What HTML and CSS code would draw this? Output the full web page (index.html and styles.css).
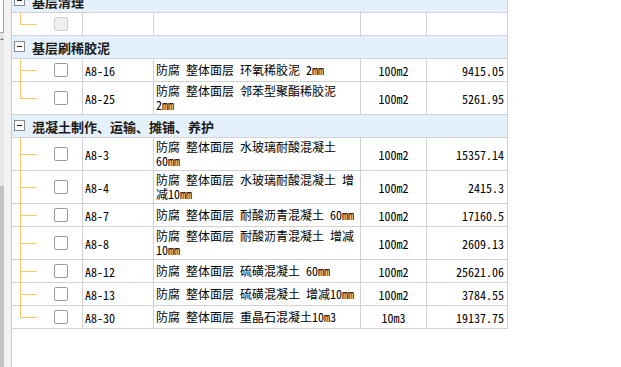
FILE: index.html
```html
<!DOCTYPE html>
<html lang="zh-CN">
<head>
<meta charset="utf-8">
<title>定额列表</title>
<link rel="stylesheet" href="styles.css">
</head>
<body>
<div class="page">
  <div class="side">
    <div class="side-track">
      <div class="side-box"></div>
      <div class="side-arrow"><span class="caret"></span></div>
      <div class="side-mid"></div>
      <div class="side-thumb"></div>
    </div>
  </div>
  <div class="main">
    <div class="list">
      <div class="group group-first"><span class="toggle"></span><span class="gtitle">基层清理</span></div>
      <div class="row">
        <div class="c tree last"><span class="chk disabled"></span></div>
        <div class="c code"></div>
        <div class="c desc"></div>
        <div class="c unit"></div>
        <div class="c num"></div>
      </div>

      <div class="group"><span class="toggle"></span><span class="gtitle">基层刷稀胶泥</span></div>
      <div class="row">
        <div class="c tree"><span class="chk"></span></div>
        <div class="c code">A8-16</div>
        <div class="c desc">防腐 整体面层 环氧稀胶泥 2mm</div>
        <div class="c unit">100m2</div>
        <div class="c num">9415.05</div>
      </div>
      <div class="row tall">
        <div class="c tree last"><span class="chk"></span></div>
        <div class="c code">A8-25</div>
        <div class="c desc">防腐 整体面层 邻苯型聚酯稀胶泥 2mm</div>
        <div class="c unit">100m2</div>
        <div class="c num">5261.95</div>
      </div>

      <div class="group"><span class="toggle"></span><span class="gtitle">混凝土制作、运输、摊铺、养护</span></div>
      <div class="row tall">
        <div class="c tree"><span class="chk"></span></div>
        <div class="c code">A8-3</div>
        <div class="c desc">防腐 整体面层 水玻璃耐酸混凝土 60mm</div>
        <div class="c unit">100m2</div>
        <div class="c num">15357.14</div>
      </div>
      <div class="row tall">
        <div class="c tree"><span class="chk"></span></div>
        <div class="c code">A8-4</div>
        <div class="c desc">防腐 整体面层 水玻璃耐酸混凝土 增减10mm</div>
        <div class="c unit">100m2</div>
        <div class="c num">2415.3</div>
      </div>
      <div class="row">
        <div class="c tree"><span class="chk"></span></div>
        <div class="c code">A8-7</div>
        <div class="c desc">防腐 整体面层 耐酸沥青混凝土 60mm</div>
        <div class="c unit">100m2</div>
        <div class="c num">17160.5</div>
      </div>
      <div class="row tall">
        <div class="c tree"><span class="chk"></span></div>
        <div class="c code">A8-8</div>
        <div class="c desc">防腐 整体面层 耐酸沥青混凝土 增减10mm</div>
        <div class="c unit">100m2</div>
        <div class="c num">2609.13</div>
      </div>
      <div class="row">
        <div class="c tree"><span class="chk"></span></div>
        <div class="c code">A8-12</div>
        <div class="c desc">防腐 整体面层 硫磺混凝土 60mm</div>
        <div class="c unit">100m2</div>
        <div class="c num">25621.06</div>
      </div>
      <div class="row">
        <div class="c tree"><span class="chk"></span></div>
        <div class="c code">A8-13</div>
        <div class="c desc">防腐 整体面层 硫磺混凝土 增减10mm</div>
        <div class="c unit">100m2</div>
        <div class="c num">3784.55</div>
      </div>
      <div class="row">
        <div class="c tree last"><span class="chk"></span></div>
        <div class="c code">A8-30</div>
        <div class="c desc">防腐 整体面层 重晶石混凝土10m3</div>
        <div class="c unit">10m3</div>
        <div class="c num">19137.75</div>
      </div>
    </div>
  </div>
</div>
</body>
</html>
```

FILE: styles.css
```css
* { box-sizing: border-box; }
html, body { margin: 0; padding: 0; background: #fff; }
body {
  width: 621px;
  height: 367px;
  overflow: hidden;
  font-family: "Noto Sans Mono CJK SC", "Noto Sans CJK SC", "Liberation Mono", monospace;
  font-size: 12px;
  color: #000;
}
.page { display: flex; height: 367px; }

.side { width: 11px; background: #f2f2f2; flex: none; display: flex; }
.side-track { width: 4px; display: flex; flex-direction: column; }
.side-box { height: 33px; background: #fff; border-right: 1px solid #a8a8a8; border-bottom: 1px solid #a8a8a8; flex: none; }
.side-arrow { height: 12px; background: #e6e6e6; flex: none; display: flex; justify-content: center; align-items: center; }
.caret {
  width: 0; height: 0;
  border-left: 2px solid transparent;
  border-right: 2px solid transparent;
  border-bottom: 2px solid #777;
}
.side-mid { height: 141px; background: #e6e6e6; flex: none; }
.side-thumb { flex: 1; background: #c3c3c3; }

.main { flex: 1; border-left: 1px solid #cacaca; }
.list { width: 496px; }

.group {
  height: 23px;
  background: #e4f1fc;
  border-right: 1px solid #d2d2d2;
  border-bottom: 1px solid #d2d2d2;
  display: flex;
  align-items: center;
  padding-left: 2px;
}
.group-first { margin-top: -10px; }
.toggle {
  width: 11px; height: 11px;
  border: 1px solid #8a8a8a;
  background: #fff;
  position: relative;
  flex: none;
  margin-top: -1px;
}
.toggle::after {
  content: "";
  position: absolute;
  left: 2px; right: 2px; top: 4px;
  height: 1px;
  background: #222;
}
.gtitle {
  margin-left: 7px;
  font-family: "Noto Sans CJK SC", sans-serif;
  font-weight: bold;
  font-size: 13px;
  color: #1a1a1a;
  white-space: nowrap;
}

.row {
  display: grid;
  grid-template-columns: 71px 71px 207px 66px 81px;
  height: 23px;
}
.row.tall { height: 33px; }
.c {
  border-right: 1px solid #d2d2d2;
  border-bottom: 1px solid #d2d2d2;
  display: flex;
  align-items: center;
  overflow: hidden;
}
.tree {
  position: relative;
  padding-left: 42px;
  overflow: visible;
}
.tree::before {
  content: "";
  position: absolute;
  left: 8px; top: 0; bottom: -1px;
  width: 1px;
  background: #ffc96b;
  z-index: 1;
}
.tree.last::before { bottom: auto; height: 50%; }
.tree::after {
  content: "";
  position: absolute;
  left: 8px; top: 50%;
  width: 17px; height: 1px;
  background: #ffc96b;
}
.chk {
  width: 14px; height: 14px;
  border: 1px solid #9a9a9a;
  border-radius: 2px;
  background: #fff;
}
.chk.disabled { background: #efefef; border-color: #d0d0d0; }

.code { padding-left: 2px; white-space: nowrap; }
.desc { padding: 0 3px 0 2px; line-height: 14px; }
.unit { justify-content: center; }
.num { justify-content: flex-end; padding-right: 3px; }
```
